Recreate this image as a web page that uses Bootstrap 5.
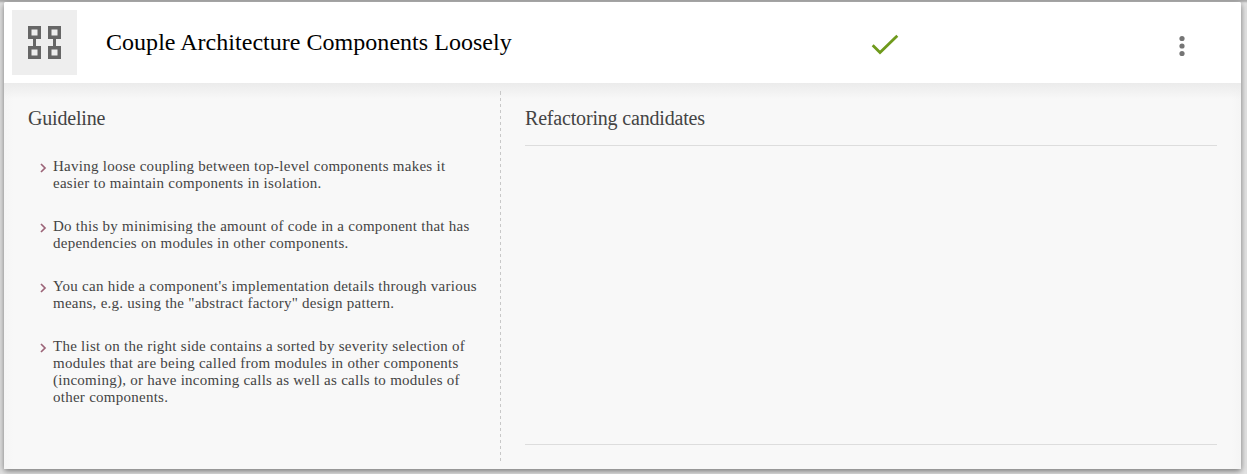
<!DOCTYPE html>
<html lang="en">
<head>
<meta charset="utf-8">
<meta name="viewport" content="width=device-width, initial-scale=1">
<title>Couple Architecture Components Loosely</title>
<link href="https://cdn.jsdelivr.net/npm/bootstrap@5.3.0/dist/css/bootstrap.min.css" rel="stylesheet">
<style>
body{background:#e5e5e5;font-family:"Liberation Serif",serif;color:#444;height:474px;overflow:hidden;padding:2px 6px 5px 4px;box-shadow:inset 0 3px 2px -1px #aaa}
.panel{height:467px;border:0;border-radius:2px 2px 0 0;background:#f8f8f8;box-shadow:0 2px 6px rgba(0,0,0,.5)}
.panel-head{height:81px;background:#fff;border-radius:2px 2px 0 0;padding:8px}
.tile{width:65px;height:65px;background:#eee}
.title{font-size:24px;line-height:28px;letter-spacing:.03px;color:#000;margin-left:29px;width:765px;padding-bottom:1px}
.overflow-dots{margin-right:47px}
.panel-body{background:linear-gradient(#ebebeb,rgba(248,248,248,0) 16px),linear-gradient(90deg,#f5f5f5,#f8f8f8 10px,#f8f8f8 calc(100% - 10px),#f5f5f5);padding:8px 24px}
.guide{width:472px}
.separator{width:1px;background:linear-gradient(#c8c8c8,#c8c8c8) 0 0/1px 4px no-repeat,repeating-linear-gradient(transparent 0 1px,#c8c8c8 1px 4px,transparent 4px 7px) 0 0/1px 0,repeating-linear-gradient(transparent 0 1px,#c8c8c8 1px 4px,transparent 4px 6px,transparent 6px 7px) 0 0/1px 0,repeating-linear-gradient(transparent 0 1px,#c8c8c8 1px 4px,transparent 4px 6px)}
.column{padding-top:15px}
h2{font-size:20px;line-height:24px;font-weight:400;margin:0;letter-spacing:-.18px}
.separator{background:linear-gradient(#c8c8c8,#c8c8c8) 0 0/1px 4px no-repeat,linear-gradient(transparent 1px,#c8c8c8 1px 4px,transparent 4px) 0 0/1px 6px}
.rules{margin:28px 0 0 11px;font-size:15px;line-height:17px;letter-spacing:.26px}
.rules li{white-space:nowrap;margin-bottom:26px}
.rules svg{margin:5px 6px 0 0}
.candidates{margin:15px 0 8px;border-top:1px solid #ddd;border-bottom:1px solid #ddd}
</style>
<script src="https://cdn.jsdelivr.net/npm/bootstrap@5.3.0/dist/js/bootstrap.bundle.min.js"></script>
</head>
<body>
<main class="card panel">
  <header class="panel-head d-flex">
    <div class="tile flex-shrink-0 d-flex align-items-center justify-content-center">
      <svg width="33" height="33" viewBox="0 0 33 33" fill="none" stroke="#666" stroke-width="3.5"><path d="M1.75 1.75h9.5v9.5h-9.5zM21.75 1.75h9.5v9.5h-9.5zM1.75 21.75h9.5v9.5h-9.5zM21.75 21.75h9.5v9.5h-9.5z"/><path stroke-width="3" d="M6.5 12v9M26.5 12v9"/></svg>
    </div>
    <h1 class="title mb-0 align-self-center fw-normal">Couple Architecture Components Loosely</h1>
    <svg class="mt-4" width="28" height="22" viewBox="0 0 28 22" fill="none" stroke="#6f9a1c" stroke-width="2.8"><path d="M1.7 11.3l7.3 7.2L26.3 1.7"/></svg>
    <svg class="overflow-dots ms-auto mt-4" width="8" height="24" viewBox="0 0 8 24" fill="#757575"><circle cx="4" cy="4.5" r="2.6"/><circle cx="4" cy="12" r="2.6"/><circle cx="4" cy="19.5" r="2.6"/></svg>
  </header>
  <div class="panel-body d-flex flex-grow-1">
    <section class="guide column flex-shrink-0">
      <h2>Guideline</h2>
      <ul class="rules list-unstyled">
        <li class="d-flex"><svg width="8" height="10" fill="none" stroke="#9c6478" stroke-width="1.7"><path d="M2 1l4 4-4 4"/></svg><span>Having loose coupling between top-level components makes it<br>easier to maintain components in isolation.</span></li>
        <li class="d-flex"><svg width="8" height="10" fill="none" stroke="#9c6478" stroke-width="1.7"><path d="M2 1l4 4-4 4"/></svg><span>Do this by minimising the amount of code in a component that has<br>dependencies on modules in other components.</span></li>
        <li class="d-flex"><svg width="8" height="10" fill="none" stroke="#9c6478" stroke-width="1.7"><path d="M2 1l4 4-4 4"/></svg><span>You can hide a component's implementation details through various<br>means, e.g. using the "abstract factory" design pattern.</span></li>
        <li class="d-flex"><svg width="8" height="10" fill="none" stroke="#9c6478" stroke-width="1.7"><path d="M2 1l4 4-4 4"/></svg><span>The list on the right side contains a sorted by severity selection of<br>modules that are being called from modules in other components<br>(incoming), or have incoming calls as well as calls to modules of<br>other components.</span></li>
      </ul>
    </section>
    <div class="separator"></div>
    <section class="column flex-grow-1 d-flex flex-column ps-4 pb-2">
      <h2>Refactoring candidates</h2>
      <div class="candidates flex-grow-1"></div>
    </section>
  </div>
</main>
</body>
</html>
